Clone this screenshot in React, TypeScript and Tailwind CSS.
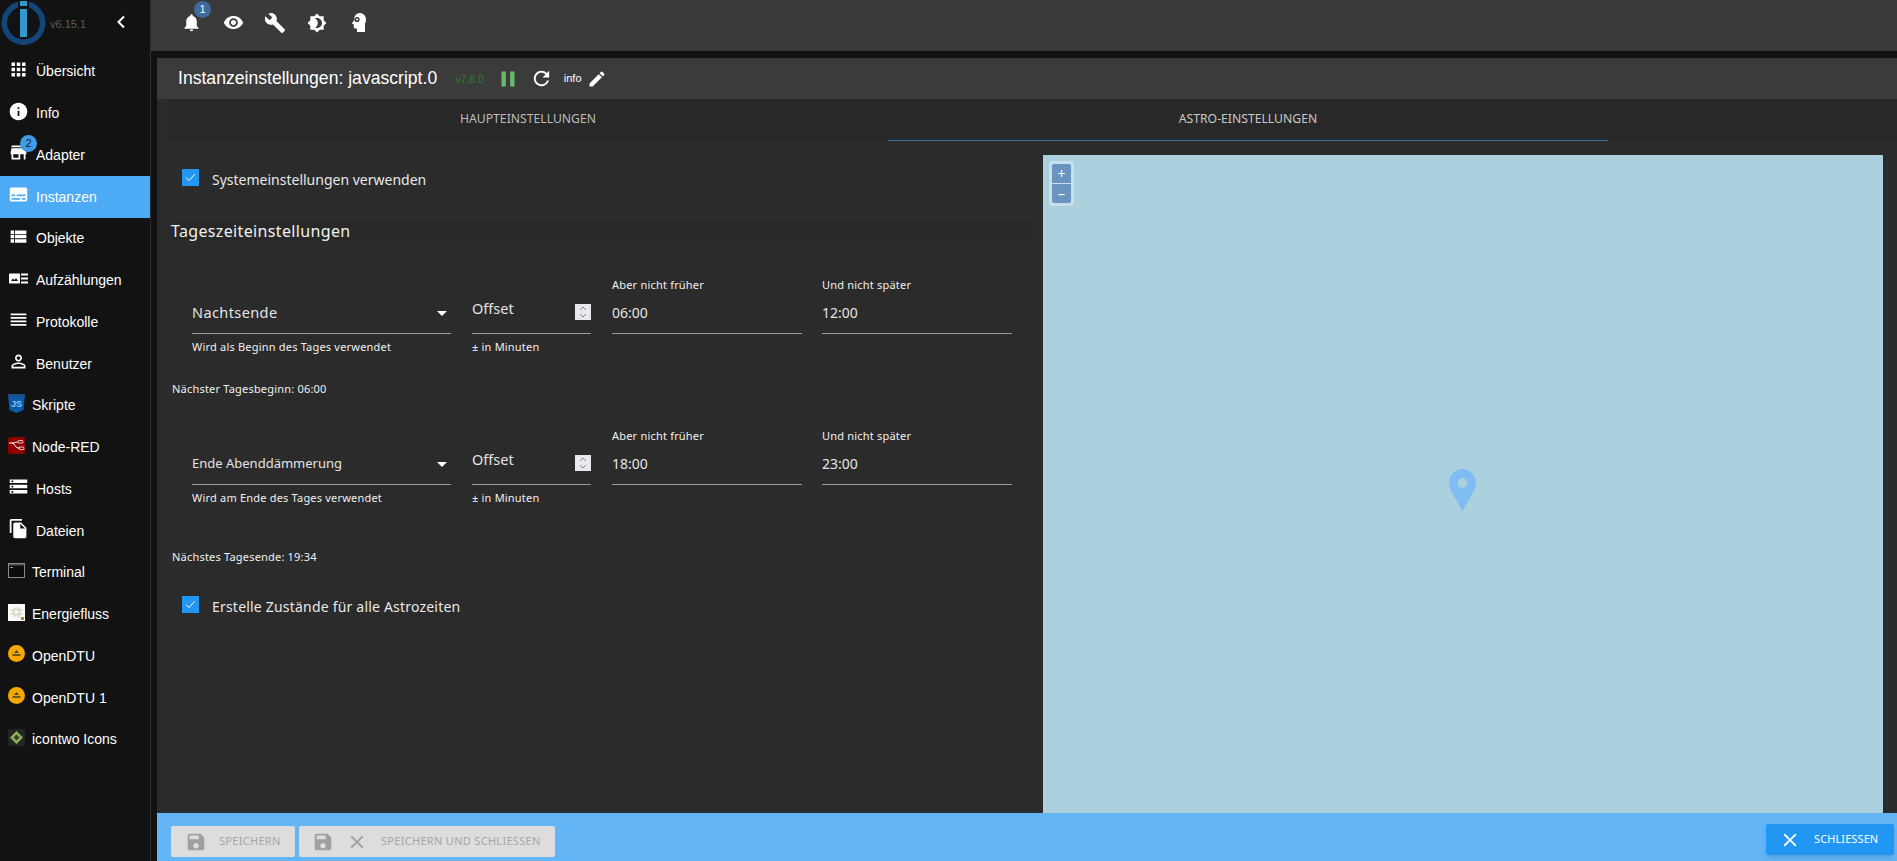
import type { ReactNode } from "react";
import {
  MdApps,
  MdBrightness4,
  MdBuild,
  MdClose,
  MdEdit,
  MdFileCopy,
  MdInfo,
  MdNotifications,
  MdPause,
  MdPersonOutline,
  MdRefresh,
  MdReorder,
  MdSave,
  MdStorage,
  MdStore,
  MdSubtitles,
  MdViewList,
  MdVisibility,
} from "react-icons/md";

const arial = "font-['Liberation_Sans',Arial,sans-serif]";
const noto = "font-['Noto_Sans',sans-serif]";

function Logo() {
  return (
    <svg width="45" height="46" viewBox="0 0 45 46" className="shrink-0">
      <circle cx="22.5" cy="23" r="19.2" fill="none" stroke="#144578" strokeWidth="5.6" />
      <rect x="17" y="0" width="11" height="8" fill="#121212" />
      <rect x="19" y="1" width="7" height="5" fill="#3399cc" />
      <rect x="19" y="9" width="7" height="28" fill="#3399cc" />
    </svg>
  );
}

function AufzaehlungIcon() {
  return (
    <svg width="19" height="19" viewBox="0 0 19 19" fill="white">
      <path d="M1 4.5h9c.6 0 1 .4 1 1v8c0 .6-.4 1-1 1H1c-.6 0-1-.4-1-1v-8c0-.6.4-1 1-1z" />
      <path d="M2 12l2-2.5 1.5 1.5 1.5-2 2 3z" fill="#121212" />
      <rect x="12" y="4.5" width="7" height="2" />
      <rect x="12" y="8.5" width="7" height="2" />
      <rect x="12" y="12.5" width="7" height="2" />
    </svg>
  );
}

function JsIcon() {
  return (
    <svg width="17" height="19" viewBox="0 0 17 19">
      <path d="M0 0h17l-1.5 16L8.5 19l-7-3z" fill="#0a5aa8" />
      <rect x="0" y="0" width="17" height="3" fill="#1c4f86" />
      <text x="8.5" y="13" textAnchor="middle" fontSize="9" fontWeight="700" fill="#8fc4f0" fontFamily="Liberation Sans">
        JS
      </text>
    </svg>
  );
}

function NodeRedIcon() {
  return (
    <svg width="17" height="17" viewBox="0 0 17 17">
      <rect width="17" height="17" rx="2" fill="#8f0000" />
      <path d="M1 6h3c3 0 3 5 6 5h2M4 6c3 0 3-1 6-1" fill="none" stroke="#ffffff" strokeWidth="1" />
      <rect x="10" y="3.5" width="5" height="2.5" rx="1" fill="none" stroke="#ffffff" strokeWidth="0.8" />
      <rect x="11" y="10" width="5" height="2.5" rx="1" fill="none" stroke="#ffffff" strokeWidth="0.8" />
    </svg>
  );
}

function TerminalIcon() {
  return (
    <svg width="17" height="15" viewBox="0 0 17 15">
      <rect x="0.5" y="0.5" width="16" height="14" fill="#0c0c0c" stroke="#8a8a8a" />
      <rect x="1" y="1" width="15" height="1.5" fill="#555555" />
      <rect x="2.5" y="4" width="2" height="1" fill="#cccccc" />
    </svg>
  );
}

function EnergyIcon() {
  return (
    <svg width="17" height="17" viewBox="0 0 17 17">
      <rect width="17" height="17" fill="#fbfbf8" />
      <path d="M2 6h13M2 10h13M6 3v11M11 3v11" stroke="#c9d4c4" strokeWidth="1" />
      <circle cx="8.5" cy="8" r="4" fill="none" stroke="#d8d8c8" />
      <rect x="13" y="13" width="3" height="3" fill="#b8862c" />
    </svg>
  );
}

function DtuIcon() {
  return (
    <svg width="17" height="17" viewBox="0 0 17 17">
      <circle cx="8.5" cy="8.5" r="8.5" fill="#f5a800" />
      <path d="M6 8l2.5-3L11 8z" fill="#4b4b3c" />
      <rect x="4.5" y="9" width="8" height="2" fill="#6c5a20" />
    </svg>
  );
}

function IcontwoIcon() {
  return (
    <svg width="17" height="17" viewBox="0 0 17 17">
      <rect width="17" height="17" rx="2" fill="#252525" />
      <path d="M8.5 2l6.5 6.5-6.5 6.5L2 8.5z" fill="#8cb05a" />
      <path d="M8.5 5.5l3 3-3 3-3-3z" fill="#39402f" />
    </svg>
  );
}

type NavItem = { label: string; icon: ReactNode; picture?: boolean; active?: boolean; badge?: number };

const navItems: NavItem[] = [
  { label: "Übersicht", icon: <MdApps size={21} /> },
  { label: "Info", icon: <MdInfo size={21} /> },
  { label: "Adapter", icon: <MdStore size={21} />, badge: 2 },
  { label: "Instanzen", icon: <MdSubtitles size={21} />, active: true },
  { label: "Objekte", icon: <MdViewList size={21} /> },
  { label: "Aufzählungen", icon: <AufzaehlungIcon /> },
  { label: "Protokolle", icon: <MdReorder size={21} /> },
  { label: "Benutzer", icon: <MdPersonOutline size={21} /> },
  { label: "Skripte", icon: <JsIcon />, picture: true },
  { label: "Node-RED", icon: <NodeRedIcon />, picture: true },
  { label: "Hosts", icon: <MdStorage size={21} /> },
  { label: "Dateien", icon: <MdFileCopy size={21} /> },
  { label: "Terminal", icon: <TerminalIcon />, picture: true },
  { label: "Energiefluss", icon: <EnergyIcon />, picture: true },
  { label: "OpenDTU", icon: <DtuIcon />, picture: true },
  { label: "OpenDTU 1", icon: <DtuIcon />, picture: true },
  { label: "icontwo Icons", icon: <IcontwoIcon />, picture: true },
];

function Sidebar() {
  return (
    <aside className={`w-[151px] shrink-0 bg-[#121212] border-r border-[#2f2f2f] text-white text-[14px] ${arial}`}>
      <div className="flex h-[51px] items-start pl-[1px]">
        <Logo />
        <span className="mt-[16px] ml-[4px] text-[11px] text-[#5c5c5c]">v6.15.1</span>
        <svg width="12" height="14" viewBox="0 0 12 14" className="mt-[15px] ml-[29px]">
          <path d="M9 1.5L3.5 7 9 12.5" fill="none" stroke="white" strokeWidth="2" />
        </svg>
      </div>
      {navItems.map((item) => (
        <div key={item.label} className={`relative flex h-[41.75px] items-center gap-[7px] pl-[8px] ${item.active ? "bg-[#4dabf5]" : ""}`}>
          <span className={`flex shrink-0 items-center justify-center pb-[5px] ${item.picture ? "w-[17px]" : "w-[21px]"}`}>{item.icon}</span>
          <span>{item.label}</span>
          {item.badge ? (
            <span className="absolute left-[20px] top-0 flex h-[17px] w-[17px] items-center justify-center rounded-full bg-[#3f9be8] text-[11px] text-[#123]">
              {item.badge}
            </span>
          ) : null}
        </div>
      ))}
    </aside>
  );
}

function ExpertIcon() {
  return (
    <svg width="14" height="19" viewBox="0 0 14 19" fill="white">
      <path d="M7.5 0C11 0 14 2.6 14 6.5c0 1.8-.4 3-1 4V19H5v-3.5H3c-.8 0-1.2-.5-1.2-1.2V11.5L.4 10.8c-.4-.2-.5-.5-.3-.8L2 7.2C2 3 4.5 0 7.5 0z" />
      <circle cx="5" cy="6.5" r="2.6" fill="#3a3a3a" />
      <circle cx="5" cy="6.5" r="1" fill="white" />
    </svg>
  );
}

function TopIcon({ children }: { children: ReactNode }) {
  return <div className="relative flex w-[41.75px] justify-center">{children}</div>;
}

function TopBar() {
  return (
    <header className="flex h-[51px] shrink-0 items-center bg-[#3a3a3a] pb-[6px] pl-[20px] text-white">
      <TopIcon>
        <MdNotifications size={21} />
        <span className={`absolute left-[23px] top-[-11px] flex h-[17px] w-[17px] items-center justify-center rounded-full bg-[#3f6a9b] text-[11px] ${arial}`}>
          1
        </span>
      </TopIcon>
      <TopIcon>
        <MdVisibility size={21} />
      </TopIcon>
      <TopIcon>
        <MdBuild size={22} />
      </TopIcon>
      <TopIcon>
        <MdBrightness4 size={20} />
      </TopIcon>
      <TopIcon>
        <ExpertIcon />
      </TopIcon>
    </header>
  );
}

function Field({
  label,
  value,
  valueClass,
  help,
  caret,
  spin,
  className,
}: {
  label?: string;
  value: string;
  valueClass?: string;
  help?: string;
  caret?: boolean;
  spin?: boolean;
  className: string;
}) {
  return (
    <div className={`${className} shrink-0`}>
      <div className="h-[17px] text-[11px] leading-[17px] tracking-[0.2px] text-[#f0f0f0]">{label}</div>
      <div className="relative mt-[8px] flex h-[33px] items-start border-b border-[#9b9b9b] leading-[23px] text-[#e4e4e4]">
        <span className={valueClass ?? "text-[14px]"}>{value}</span>
        {caret ? <span className="absolute right-[4px] top-[10px] h-0 w-0 border-x-[5px] border-t-[5px] border-x-transparent border-t-white" /> : null}
        {spin ? (
          <span className="absolute right-0 top-[3px] flex h-[16px] w-[16px] items-center justify-center bg-[#e9e9ed]">
            <svg width="8" height="12" viewBox="0 0 8 12" fill="none" stroke="#8a8a8a" strokeWidth="1">
              <path d="M1 4l3-3 3 3M1 8l3 3 3-3" />
            </svg>
          </span>
        ) : null}
      </div>
      <div className="mt-[5px] h-[16px] text-[11px] leading-[16px] tracking-[0.2px] text-[#f0f0f0]">{help}</div>
    </div>
  );
}

function AstroRow({ select, selectClass, help, early, late }: { select: string; selectClass: string; help: string; early: string; late: string }) {
  return (
    <div className="flex gap-[21px] pl-[35px]">
      <Field value={select} valueClass={selectClass} help={help} caret className="w-[259px]" />
      <Field value="Offset" valueClass="-mt-[4px] text-[14.5px]" help="± in Minuten" spin className="w-[119px]" />
      <Field label="Aber nicht früher" value={early} className="w-[190px]" />
      <Field label="Und nicht später" value={late} className="w-[190px] -ml-[1px]" />
    </div>
  );
}

function CheckRow({ label, className, labelClass }: { label: string; className: string; labelClass?: string }) {
  return (
    <div className={`flex items-start pl-[25px] ${className}`}>
      <span className="flex h-[17px] w-[17px] items-center justify-center bg-[#2196f3]">
        <svg width="11" height="9" viewBox="0 0 11 9" fill="none" stroke="white" strokeWidth="1">
          <path d="M1 4.5l3 3 6-6.5" />
        </svg>
      </span>
      <span className={`ml-[13px] mt-[1px] text-[14px] leading-[20px] text-[#e8e8e8] ${labelClass ?? ""}`}>{label}</span>
    </div>
  );
}

function Settings() {
  return (
    <div className={`w-[886px] shrink-0 ${noto}`}>
      <CheckRow label="Systemeinstellungen verwenden" className="mt-[28px]" />
      <div className="ml-[14px] mr-[11px] mt-[32px] h-[18px] bg-[#282828] text-[16px] leading-[18px] tracking-[0.35px] text-[#f0f0f0]">Tageszeiteinstellungen</div>
      <div className="mt-[36px]">
        <AstroRow select="Nachtsende" selectClass="text-[14.5px] tracking-[0.4px]" help="Wird als Beginn des Tages verwendet" early="06:00" late="12:00" />
      </div>
      <div className="ml-[15px] mt-[26px] text-[11px] leading-[16px] tracking-[0.2px] text-[#f0f0f0]">Nächster Tagesbeginn: 06:00</div>
      <div className="mt-[30px]">
        <AstroRow select="Ende Abenddämmerung" selectClass="text-[13px]" help="Wird am Ende des Tages verwendet" early="18:00" late="23:00" />
      </div>
      <div className="ml-[15px] mt-[43px] text-[11px] leading-[16px] tracking-[0.2px] text-[#f0f0f0]">Nächstes Tagesende: 19:34</div>
      <CheckRow label="Erstelle Zustände für alle Astrozeiten" labelClass="tracking-[0.2px]" className="mt-[31px]" />
    </div>
  );
}

function MapPane() {
  return (
    <div className="relative mr-[14px] mt-[14px] flex-1 bg-[#abd1df]">
      <div className="absolute left-[6px] top-[6px] rounded-[4px] bg-[#c8e0ea] p-[3px]">
        <div className="flex h-[19px] w-[19px] items-center justify-center rounded-t-[2px] bg-[#6a93c0] text-[14px] leading-none text-white">+</div>
        <div className="mt-[1px] flex h-[19px] w-[19px] items-center justify-center rounded-b-[2px] bg-[#6a93c0] text-[14px] leading-none text-white">–</div>
      </div>
      <svg width="27" height="43" viewBox="0 0 27 43" className="absolute left-[406px] top-[314px]">
        <path d="M13.5 0C6 0 0 6 0 13.5c0 9 9 18 13.5 29.5C18 31.5 27 22.5 27 13.5 27 6 21 0 13.5 0z" fill="#7fbdf2" />
        <circle cx="13.5" cy="14" r="5" fill="#abd1df" />
      </svg>
    </div>
  );
}

function Footer() {
  return (
    <footer className={`flex h-[48px] shrink-0 items-start bg-[#64b5f6] text-[11px] tracking-[0.3px] ${noto}`}>
      <button type="button" className="ml-[14px] mt-[13px] flex h-[31px] w-[124px] items-center rounded-[2px] bg-[#dddddd] pl-[14px] text-[#a6a6a6]">
        <MdSave size={22} className="text-[#a0a0a0]" />
        <span className="ml-[12px]">SPEICHERN</span>
      </button>
      <button type="button" className="ml-[4px] mt-[13px] flex h-[31px] w-[256px] items-center rounded-[2px] bg-[#dddddd] pl-[13px] text-[#a6a6a6]">
        <MdSave size={22} className="text-[#a0a0a0]" />
        <MdClose size={22} className="ml-[12px] text-[#a0a0a0]" />
        <span className="ml-[13px]">SPEICHERN UND SCHLIESSEN</span>
      </button>
      <button type="button" className="ml-auto mr-[3px] mt-[11px] flex h-[31px] w-[128px] items-center rounded-[2px] bg-[#2196f3] pl-[13px] tracking-[0.1px] text-white shadow-md">
        <MdClose size={22} />
        <span className="ml-[13px]">SCHLIESSEN</span>
      </button>
    </footer>
  );
}

export default function App() {
  return (
    <div className="flex h-[861px] w-[1897px] overflow-hidden bg-[#111111]">
      <Sidebar />
      <main className="flex min-w-0 flex-1 flex-col">
        <TopBar />
        <section className="ml-[6px] mt-[7px] flex min-h-0 flex-1 flex-col bg-[#2b2b2b]">
          <div className={`flex h-[41px] shrink-0 items-center bg-[#3b3b3b] pl-[21px] text-white ${arial}`}>
            <span className="text-[17.6px]">Instanzeinstellungen: javascript.0</span>
            <span className="ml-[18px] mt-[3px] text-[10.5px] text-[#2e7d32]">v7.8.0</span>
            <MdPause size={26} className="ml-[11px] text-[#66bb6a]" />
            <MdRefresh size={23} className="ml-[9px]" />
            <span className="ml-[11px] text-[11px]">info</span>
            <MdEdit size={20} className="ml-[5px]" />
          </div>
          <div className={`ml-[11px] flex h-[42px] shrink-0 bg-[#282828] pb-[1px] text-[12.2px] ${noto}`}>
            <div className="flex h-[41px] w-[720px] items-center justify-center text-[#bdbdbd]">HAUPTEINSTELLUNGEN</div>
            <div className="flex h-[42px] w-[720px] items-center justify-center border-b border-[#3a6ea5] pb-[1px] text-[#c9c9c9]">ASTRO-EINSTELLUNGEN</div>
          </div>
          <div className="flex min-h-0 flex-1">
            <Settings />
            <MapPane />
          </div>
          <Footer />
        </section>
      </main>
    </div>
  );
}
